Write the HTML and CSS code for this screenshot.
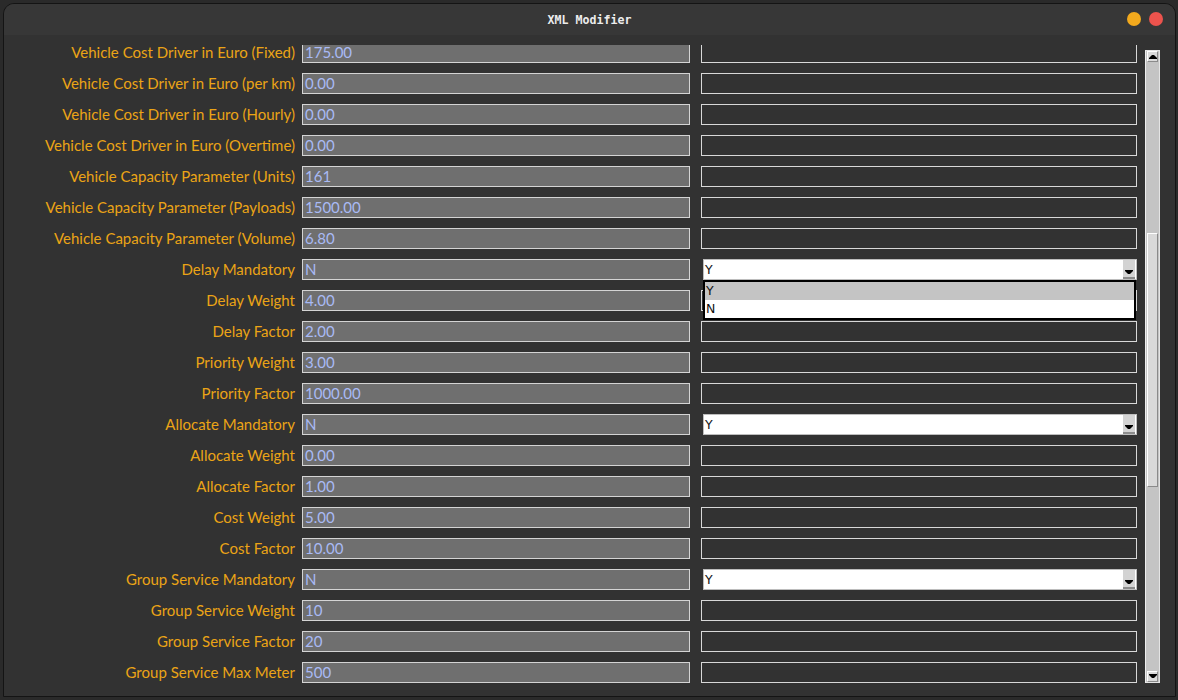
FILE: index.html
```html
<!DOCTYPE html>
<html>
<head>
<meta charset="utf-8">
<link rel="stylesheet" href="styles.css">
<title>XML Modifier</title>
</head>
<body>
<div class="window">
  <div class="titlebar">
    <div class="title">XML Modifier</div>
    <div class="controls"><span class="dot dot-min"></span><span class="dot dot-close"></span></div>
  </div>
  <div class="body">
    <div class="viewport">
      <div class="grid">
        <div class="label cut">Vehicle Cost Driver in Euro (Fixed)</div><div class="val cut">175.00</div><div class="edit"><div class="box cut"></div></div>
        <div class="label">Vehicle Cost Driver in Euro (per km)</div><div class="val">0.00</div><div class="edit"><div class="box"></div></div>
        <div class="label">Vehicle Cost Driver in Euro (Hourly)</div><div class="val">0.00</div><div class="edit"><div class="box"></div></div>
        <div class="label">Vehicle Cost Driver in Euro (Overtime)</div><div class="val">0.00</div><div class="edit"><div class="box"></div></div>
        <div class="label">Vehicle Capacity Parameter (Units)</div><div class="val">161</div><div class="edit"><div class="box"></div></div>
        <div class="label">Vehicle Capacity Parameter (Payloads)</div><div class="val">1500.00</div><div class="edit"><div class="box"></div></div>
        <div class="label">Vehicle Capacity Parameter (Volume)</div><div class="val">6.80</div><div class="edit"><div class="box"></div></div>
        <div class="label">Delay Mandatory</div><div class="val">N</div>
        <div class="edit"><div class="combo"><span class="combo-text">Y</span><span class="combo-btn"><svg width="8" height="5" viewBox="0 0 8 5"><polygon points="0,0 8,0 8,1 5,4 3,4 0,1" fill="#000"/></svg></span>
          <div class="popup"><div class="opt sel">Y</div><div class="opt">N</div></div></div></div>
        <div class="label">Delay Weight</div><div class="val">4.00</div><div class="edit"><div class="box"></div></div>
        <div class="label">Delay Factor</div><div class="val">2.00</div><div class="edit"><div class="box"></div></div>
        <div class="label">Priority Weight</div><div class="val">3.00</div><div class="edit"><div class="box"></div></div>
        <div class="label">Priority Factor</div><div class="val">1000.00</div><div class="edit"><div class="box"></div></div>
        <div class="label">Allocate Mandatory</div><div class="val">N</div>
        <div class="edit"><div class="combo"><span class="combo-text">Y</span><span class="combo-btn"><svg width="8" height="5" viewBox="0 0 8 5"><polygon points="0,0 8,0 8,1 5,4 3,4 0,1" fill="#000"/></svg></span></div></div>
        <div class="label">Allocate Weight</div><div class="val">0.00</div><div class="edit"><div class="box"></div></div>
        <div class="label">Allocate Factor</div><div class="val">1.00</div><div class="edit"><div class="box"></div></div>
        <div class="label">Cost Weight</div><div class="val">5.00</div><div class="edit"><div class="box"></div></div>
        <div class="label">Cost Factor</div><div class="val">10.00</div><div class="edit"><div class="box"></div></div>
        <div class="label">Group Service Mandatory</div><div class="val">N</div>
        <div class="edit"><div class="combo"><span class="combo-text">Y</span><span class="combo-btn"><svg width="8" height="5" viewBox="0 0 8 5"><polygon points="0,0 8,0 8,1 5,4 3,4 0,1" fill="#000"/></svg></span></div></div>
        <div class="label">Group Service Weight</div><div class="val">10</div><div class="edit"><div class="box"></div></div>
        <div class="label">Group Service Factor</div><div class="val">20</div><div class="edit"><div class="box"></div></div>
        <div class="label">Group Service Max Meter</div><div class="val">500</div><div class="edit"><div class="box"></div></div>
      </div>
    </div>
    <div class="scrollbar">
      <div class="sb-btn"><svg width="8" height="5" viewBox="0 0 8 5"><polygon points="0,5 8,5 8,4 5,1 3,1 0,4" fill="#000"/></svg></div>
      <div class="sb-track-top"></div>
      <div class="sb-thumb"></div>
      <div class="sb-track-bottom"></div>
      <div class="sb-btn"><svg width="8" height="5" viewBox="0 0 8 5"><polygon points="0,0 8,0 8,1 5,4 3,4 0,1" fill="#000"/></svg></div>
    </div>
  </div>
</div>
</body>
</html>
```

FILE: styles.css
```css
html, body {
  margin: 0;
  padding: 0;
}
body {
  background: #2a2a2a;
  width: 1178px;
  height: 700px;
  overflow: hidden;
  padding: 3px 0 0 3px;
  box-sizing: border-box;
}
.window {
  width: 1173px;
  height: 694px;
  box-sizing: border-box;
  border: 1px solid #141414;
  border-radius: 11px 11px 0 0;
  background: #323232;
  display: flex;
  flex-direction: column;
  overflow: hidden;
}
.titlebar {
  height: 31px;
  flex: none;
  background: #373737;
  position: relative;
  display: flex;
  align-items: center;
  justify-content: center;
}
.title {
  font-family: "DejaVu Sans Mono", monospace;
  font-weight: bold;
  font-size: 11.6px;
  color: #ececec;
  padding-top: 1px;
}
.controls {
  position: absolute;
  right: 12px;
  top: 8px;
  display: flex;
  gap: 8px;
}
.dot {
  width: 14px;
  height: 14px;
  border-radius: 50%;
  display: block;
}
.dot-min { background: #f2a91d; }
.dot-close { background: #ec534d; }
.body {
  flex: 1;
  display: flex;
  padding: 10px 15px 0 0;
  min-height: 0;
}
.viewport {
  width: 1133px;
  flex: none;
}
.grid {
  display: grid;
  grid-template-columns: 298px 388px 447px;
  grid-template-rows: 18px;
  grid-auto-rows: 21px;
  row-gap: 10px;
  font-family: "Lato", sans-serif;
  font-size: 15px;
}
.label {
  color: #eba416;
  text-align: right;
  padding-right: 7px;
  padding-top: 4px;
  white-space: nowrap;
  line-height: 13px;
}
.label.cut { padding-top: 1px; }
.val {
  background: #6f6f6f;
  border: 1px solid #d4d4d4;
  color: #a9baf5;
  padding-left: 2px;
  padding-top: 3px;
  line-height: 13px;
  box-sizing: border-box;
}
.val.cut {
  border-top: none;
  padding-top: 1px;
}
.edit {
  padding-left: 11px;
}
.box {
  height: 21px;
  box-sizing: border-box;
  border: 1px solid #d8d8d8;
  background: #323232;
}
.box.cut {
  height: 18px;
  border-top: none;
}
.combo {
  position: relative;
  margin-left: 2px;
  height: 21px;
  box-sizing: border-box;
  background: #fff;
  border: 1px solid #bdbdbd;
  display: flex;
  align-items: center;
  font-family: "DejaVu Sans", sans-serif;
  font-size: 12.5px;
  color: #111;
}
.combo-text {
  flex: 1;
  padding-left: 1px;
}
.combo-btn {
  width: 12px;
  height: 19px;
  box-sizing: border-box;
  background: #d3d3d3;
  border-bottom: 2px solid #8c8c8c;
  margin-right: 1px;
  display: flex;
  align-items: flex-end;
  justify-content: center;
  padding-bottom: 2px;
}
.combo-btn svg { display: block; }
.popup {
  position: absolute;
  left: -1px;
  top: 20px;
  width: 433px;
  height: 40px;
  box-sizing: border-box;
  border: 2px solid #000;
  background: #fff;
  z-index: 5;
}
.opt {
  height: 18px;
  line-height: 18px;
  padding-left: 1px;
  color: #111;
}
.opt.sel { background: #c4c4c4; }
.scrollbar {
  margin-left: 8px;
  margin-top: 5px;
  width: 15px;
  height: 633px;
  box-sizing: border-box;
  border: 1px solid #e4e4e4;
  border-left-color: #eeeeee;
  background: #c4c4c4;
  display: flex;
  flex-direction: column;
  padding: 0 1px 0 1px;
  flex: none;
}
.sb-btn {
  height: 11px;
  flex: none;
  box-sizing: border-box;
  background: #dadada;
  border-top: 1px solid #fff;
  border-left: 1px solid #fff;
  border-right: 1px solid #8a8a8a;
  border-bottom: 1px solid #8a8a8a;
  display: flex;
  align-items: center;
  justify-content: center;
}
.sb-btn svg { display: block; }
.sb-track-top { height: 171px; flex: none; }
.sb-thumb {
  height: 254px;
  flex: none;
  box-sizing: border-box;
  background: #d9d9d9;
  border-top: 1px solid #fff;
  border-left: 1px solid #fff;
  border-right: 1px solid #8a8a8a;
  border-bottom: 1px solid #8a8a8a;
}
.sb-track-bottom { flex: 1; }
```
